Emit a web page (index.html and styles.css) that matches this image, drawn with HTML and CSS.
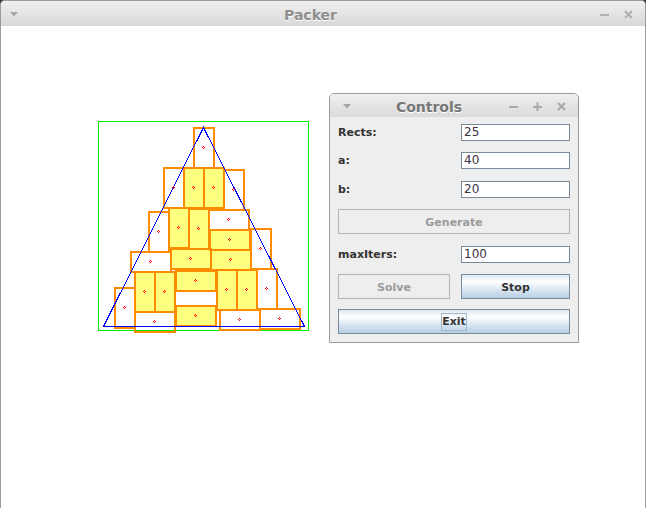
FILE: index.html
```html
<!DOCTYPE html>
<html>
<head>
<meta charset="utf-8">
<title>Packer</title>
<link rel="stylesheet" href="styles.css">
</head>
<body>
<div class="win">
  <div class="titlebar">
    <div class="tb-left">
      <svg class="ico" width="8" height="5" viewBox="0 0 8 5"><polygon points="0,0 8,0 4,4.5" fill="#a6a6a6"/></svg>
    </div>
    <div class="tb-title">Packer</div>
    <div class="tb-right">
      <svg class="ico" width="9" height="9" viewBox="0 0 9 9"><rect x="0" y="4" width="9" height="2" fill="#b0b0b0"/></svg>
      <svg class="ico" width="9" height="9" viewBox="0 0 9 9"><path d="M1 1L8 8M8 1L1 8" stroke="#b0b0b0" stroke-width="2"/></svg>
    </div>
  </div>
  <div class="content">
    <svg class="canvas" width="644" height="482" viewBox="1 26 644 482" shape-rendering="crispEdges">
      <defs>
        <path id="dot" d="M-1 0h1v1h-1zM1 0h1v1h-1zM0 -1h1v1h-1zM0 1h1v1h-1z" fill="#ff0000"/>
      </defs>
      <rect x="98.5" y="121.5" width="210" height="209" fill="none" stroke="#00f000" stroke-width="1"/>
      <g fill="#ffff80">
        <rect x="184" y="168" width="20" height="40"/>
        <rect x="204" y="168" width="20" height="40"/>
        <rect x="169" y="208" width="20" height="40"/>
        <rect x="189" y="209" width="20" height="40"/>
        <rect x="210" y="230" width="40" height="20"/>
        <rect x="171" y="249" width="40" height="20"/>
        <rect x="211" y="250" width="40" height="20"/>
        <rect x="135" y="272" width="20" height="40"/>
        <rect x="155" y="272" width="20" height="40"/>
        <rect x="176" y="271" width="40" height="20"/>
        <rect x="176" y="306" width="40" height="20"/>
        <rect x="217" y="270" width="20" height="40"/>
        <rect x="237" y="270" width="20" height="40"/>
      </g>
      <g fill="none" stroke="#ff8c00" stroke-width="2">
        <rect x="194" y="128" width="20" height="40"/>
        <rect x="164" y="168" width="20" height="40"/>
        <rect x="184" y="168" width="20" height="40"/>
        <rect x="204" y="168" width="20" height="40"/>
        <rect x="224" y="170" width="20" height="40"/>
        <rect x="149" y="212" width="20" height="40"/>
        <rect x="169" y="208" width="20" height="40"/>
        <rect x="189" y="209" width="20" height="40"/>
        <rect x="209" y="210" width="40" height="20"/>
        <rect x="210" y="230" width="40" height="20"/>
        <rect x="251" y="229" width="20" height="40"/>
        <rect x="131" y="252" width="40" height="20"/>
        <rect x="171" y="249" width="40" height="20"/>
        <rect x="211" y="250" width="40" height="20"/>
        <rect x="135" y="272" width="20" height="40"/>
        <rect x="155" y="272" width="20" height="40"/>
        <rect x="176" y="271" width="40" height="20"/>
        <rect x="176" y="306" width="40" height="20"/>
        <rect x="217" y="270" width="20" height="40"/>
        <rect x="237" y="270" width="20" height="40"/>
        <rect x="257" y="269" width="20" height="40"/>
        <rect x="115" y="288" width="20" height="40"/>
        <rect x="135" y="312" width="40" height="20"/>
        <rect x="220" y="310" width="40" height="20"/>
        <rect x="260" y="309" width="40" height="20"/>
      </g>
      <polygon points="103.5,326.5 203.5,127.5 304.5,326.5" fill="none" stroke="#0000ff" stroke-width="1"/>
      <g>
        <use href="#dot" x="203" y="147"/>
        <use href="#dot" x="173" y="187"/>
        <use href="#dot" x="193" y="187"/>
        <use href="#dot" x="213" y="187"/>
        <use href="#dot" x="233" y="189"/>
        <use href="#dot" x="158" y="231"/>
        <use href="#dot" x="178" y="227"/>
        <use href="#dot" x="198" y="228"/>
        <use href="#dot" x="228" y="219"/>
        <use href="#dot" x="229" y="239"/>
        <use href="#dot" x="260" y="248"/>
        <use href="#dot" x="150" y="261"/>
        <use href="#dot" x="190" y="258"/>
        <use href="#dot" x="230" y="259"/>
        <use href="#dot" x="144" y="291"/>
        <use href="#dot" x="164" y="291"/>
        <use href="#dot" x="195" y="280"/>
        <use href="#dot" x="195" y="315"/>
        <use href="#dot" x="226" y="289"/>
        <use href="#dot" x="246" y="289"/>
        <use href="#dot" x="266" y="288"/>
        <use href="#dot" x="124" y="307"/>
        <use href="#dot" x="154" y="321"/>
        <use href="#dot" x="239" y="319"/>
        <use href="#dot" x="279" y="318"/>
      </g>
    </svg>

    <div class="dialog">
      <div class="dlg-title">
        <div class="dt-left">
          <svg class="ico" width="8" height="5" viewBox="0 0 8 5"><polygon points="0,0 8,0 4,4.5" fill="#a6a6a6"/></svg>
        </div>
        <div class="dt-text">Controls</div>
        <div class="dt-right">
          <svg class="ico" width="9" height="9" viewBox="0 0 9 9"><rect x="0" y="4" width="9" height="2" fill="#a8a8a8"/></svg>
          <svg class="ico" width="9" height="9" viewBox="0 0 9 9"><rect x="0" y="4" width="9" height="2" fill="#a8a8a8"/><rect x="3.5" y="0.5" width="2" height="9" fill="#a8a8a8"/></svg>
          <svg class="ico" width="9" height="9" viewBox="0 0 9 9"><path d="M1 1L8 8M8 1L1 8" stroke="#a8a8a8" stroke-width="2"/></svg>
        </div>
      </div>
      <div class="dlg-body">
        <div class="lbl">Rects:</div><div class="field">25</div>
        <div class="lbl">a:</div><div class="field">40</div>
        <div class="lbl">b:</div><div class="field">20</div>
        <div class="btn disabled span2">Generate</div>
        <div class="lbl">maxIters:</div><div class="field">100</div>
        <div class="btn disabled">Solve</div><div class="btn">Stop</div>
        <div class="btn span2"><span class="focus">Exit</span></div>
      </div>
    </div>
  </div>
</div>
</body>
</html>
```
FILE: styles.css
```css
html, body {
  margin: 0;
  padding: 0;
}
body {
  width: 646px;
  height: 508px;
  overflow: hidden;
  background: #3b3b3b;
  font-family: "DejaVu Sans", "Liberation Sans", sans-serif;
}
.win {
  box-sizing: border-box;
  width: 646px;
  height: 508px;
  border: 1px solid #9c9c9c;
  border-bottom: none;
  border-radius: 5px 5px 0 0;
  background: #ffffff;
  overflow: hidden;
}
.titlebar {
  height: 25px;
  display: flex;
  align-items: center;
  background: linear-gradient(#f0f0f0, #d8d8d8);
}
.ico {
  display: block;
}
.tb-left {
  width: 27px;
  box-sizing: border-box;
  padding-left: 9px;
  padding-top: 2px;
}
.tb-title {
  flex: 1;
  text-align: center;
  font-weight: bold;
  font-size: 14px;
  line-height: 17px;
  padding-top: 4px;
  color: #8e8e8e;
  text-shadow: 0 1px 0 #ffffff;
}
.tb-right {
  width: 52px;
  box-sizing: border-box;
  padding-left: 7px;
  padding-top: 2px;
  display: flex;
  gap: 15px;
}
.content {
  position: relative;
  height: 482px;
}
.canvas {
  position: absolute;
  left: 0;
  top: 0;
}
.dialog {
  position: absolute;
  left: 328px;
  top: 67px;
  width: 250px;
  height: 250px;
  box-sizing: border-box;
  border: 1px solid #9a9a9a;
  border-radius: 5px 5px 0 0;
  background: #eeeeee;
  overflow: hidden;
}
.dlg-title {
  height: 23px;
  display: flex;
  align-items: center;
  background: linear-gradient(#efefef, #dadada);
}
.dt-left {
  width: 30px;
  box-sizing: border-box;
  padding-left: 13px;
  padding-top: 2px;
}
.dt-text {
  flex: 1;
  text-align: center;
  font-weight: bold;
  font-size: 14px;
  line-height: 17px;
  padding-top: 4px;
  color: #767676;
  text-shadow: 0 1px 0 #ffffff;
}
.dt-right {
  width: 80px;
  box-sizing: border-box;
  padding-left: 11px;
  padding-top: 2px;
  display: flex;
  gap: 15px;
}
.dlg-body {
  padding: 7px 8px 0 8px;
  display: grid;
  grid-template-columns: 112px 109px;
  grid-template-rows: 28px 29px 28px 37px 28px 35px 25px;
  column-gap: 11px;
  align-items: start;
}
.lbl {
  font-weight: bold;
  font-size: 11px;
  line-height: 17px;
  color: #333333;
}
.field {
  box-sizing: border-box;
  height: 17px;
  border: 1px solid #7a8a99;
  background: #ffffff;
  font-size: 12px;
  line-height: 15px;
  padding-left: 2px;
  color: #3a3344;
}
.btn {
  box-sizing: border-box;
  height: 25px;
  padding-top: 1px;
  border: 1px solid #7a8a99;
  background: linear-gradient(#dde8f3 0%, #ffffff 30%, #dde8f3 60%, #b8cfe5 100%);
  font-weight: bold;
  font-size: 11px;
  color: #333333;
  display: flex;
  align-items: center;
  justify-content: center;
}
.btn.disabled {
  background: #eeeeee;
  border-color: #b4b4b4;
  color: #9a9a9a;
}
.span2 {
  grid-column: 1 / span 2;
}
.focus {
  border: 1px solid #a3b8cc;
  line-height: 16px;
}
```
